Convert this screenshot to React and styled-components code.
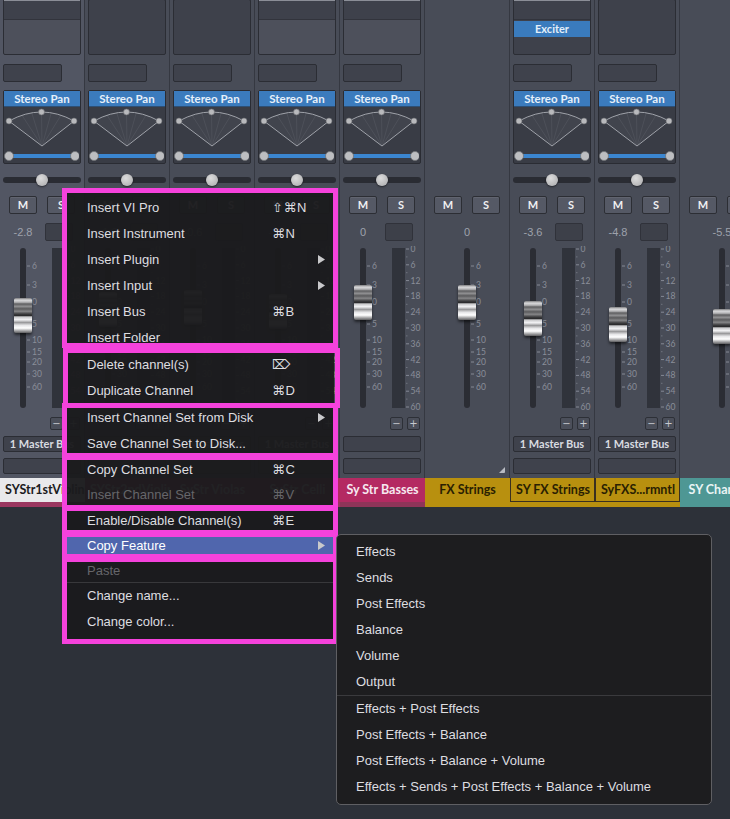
import React from "react";
import styled, { createGlobalStyle } from "styled-components";

const GlobalStyle = createGlobalStyle`
  html, body {
    margin: 0;
    padding: 0;
    background: #2d3139;
  }
  * { box-sizing: border-box; }
`;

const PINK = "#f542dc";
const GOLD = "#b8900f";

const channels = [
  { name: "SYStr1stViolins", bg: "#e9e9eb", fg: "#1b1b1d", stripe: "#9a3760", insert: "header", value: "-2.8", cap: 298, out: "1 Master Bus", selected: true },
  { name: "SYStr2ndViolins", bg: "#b42a62", fg: "#f4e6ee", stripe: "#9a3760", insert: "plain", value: "-1.2", cap: 292, out: "1 Master Bus" },
  { name: "SyStr Violas", bg: "#b42a62", fg: "#f4e6ee", stripe: "#9a3760", insert: "plain", value: "-0.6", cap: 290, out: "1 Master Bus" },
  { name: "SyStr Celli", bg: "#b42a62", fg: "#f4e6ee", stripe: "#9a3760", insert: "header", value: "-1.8", cap: 294, out: "1 Master Bus" },
  { name: "Sy Str Basses", bg: "#b42a62", fg: "#f6e8f0", stripe: "#8f3459", insert: "header", value: "0", cap: 285, out: "" },
  { name: "FX Strings", bg: GOLD, fg: "#2a1f02", stripe: GOLD, bare: true, value: "0", cap: 285, corner: true },
  { name: "SY FX Strings", bg: GOLD, fg: "#2a1f02", stripe: GOLD, outlined: true, insert: "exciter", value: "-3.6", cap: 301, out: "1 Master Bus" },
  { name: "SyFXS...rmntl", bg: GOLD, fg: "#2a1f02", stripe: GOLD, outlined: true, insert: "plain", value: "-4.8", cap: 307, out: "1 Master Bus" },
  { name: "SY Chamber", bg: "#4e9794", fg: "#eaf4f4", stripe: "#4e9794", bare: true, value: "-5.5", cap: 309 },
];

const menuItems = [
  { label: "Insert VI Pro", keys: "⇧⌘N", h: 26 },
  { label: "Insert Instrument", keys: "⌘N", h: 26 },
  { label: "Insert Plugin", sub: true, h: 26 },
  { label: "Insert Input", sub: true, h: 26 },
  { label: "Insert Bus", keys: "⌘B", h: 26 },
  { label: "Insert Folder", h: 27 },
  { label: "Delete channel(s)", keys: "⌦", h: 26 },
  { label: "Duplicate Channel", keys: "⌘D", h: 27 },
  { label: "Insert Channel Set from Disk", sub: true, h: 26 },
  { label: "Save Channel Set to Disk...", h: 27 },
  { label: "Copy Channel Set", keys: "⌘C", h: 25 },
  { label: "Insert Channel Set", keys: "⌘V", disabled: true, h: 25 },
  { label: "Enable/Disable Channel(s)", keys: "⌘E", h: 26 },
  { label: "Copy Feature", sub: true, active: true, h: 25 },
  { label: "Paste", disabled: true, sep: true, h: 25 },
  { label: "Change name...", h: 25 },
  { label: "Change color...", h: 26 },
];

const subItems = [
  "Effects",
  "Sends",
  "Post Effects",
  "Balance",
  "Volume",
  "Output",
  "-",
  "Effects + Post Effects",
  "Post Effects + Balance",
  "Post Effects + Balance + Volume",
  "Effects + Sends + Post Effects + Balance + Volume",
];

// annotation frames drawn over the menu
const frames = [
  { x: 62, y: 188, w: 276, h: 160 },
  { x: 63, y: 348, w: 277, h: 60 },
  { x: 62, y: 403, w: 276, h: 55 },
  { x: 62, y: 455, w: 276, h: 55 },
  { x: 62, y: 506, w: 276, h: 29 },
  { x: 62, y: 532, w: 276, h: 27 },
  { x: 62, y: 557, w: 276, h: 87 },
];

const faderMarks = [["6", 266], ["3", 285], ["0", 302], ["5", 324], ["10", 340], ["15", 352], ["20", 362], ["30", 374], ["60", 387]];
const meterMarks = ["0", "6", "12", "18", "24", "30", "36", "42", "48", "54", "60"];

function PanArt() {
  const rays = [0.2, 0.35, 0.5, 0.65, 0.8];
  return (
    <svg width="75" height="56" viewBox="0 0 75 56">
      <path d="M5 14 Q37.5 -4 70 14 L38 39 Z" fill="#41444d" />
      {rays.map((t) => {
        const x = (1 - t) * (1 - t) * 5 + 2 * (1 - t) * t * 37.5 + t * t * 70;
        const y = (1 - t) * (1 - t) * 14 + 2 * (1 - t) * t * -4 + t * t * 14;
        return <line key={t} x1="38" y1="39" x2={x} y2={y} stroke="#4d5059" strokeWidth="1" />;
      })}
      <path d="M5 14 Q37.5 -4 70 14" fill="none" stroke="#9fa2a9" strokeWidth="1" />
      <path d="M5 14 L38 39 L70 14" fill="none" stroke="#9fa2a9" strokeWidth="1" />
      <circle cx="5" cy="14" r="3" fill="#b8b9bc" stroke="#6a6c71" strokeWidth="0.6" />
      <circle cx="37.5" cy="5" r="3" fill="#b8b9bc" stroke="#6a6c71" strokeWidth="0.6" />
      <circle cx="70" cy="14" r="3" fill="#b8b9bc" stroke="#6a6c71" strokeWidth="0.6" />
      <line x1="5" y1="49" x2="71" y2="49" stroke="#3b86d0" strokeWidth="4" />
      <circle cx="5" cy="49" r="4.5" fill="#bdbec1" stroke="#707276" strokeWidth="0.8" />
      <circle cx="71" cy="49" r="4.5" fill="#bdbec1" stroke="#707276" strokeWidth="0.8" />
    </svg>
  );
}

function FaderArt({ centered, meter }) {
  const tx = centered ? 39 : 20;
  const top = 246;
  return (
    <svg width="84" height="166" viewBox="0 0 84 166">
      <rect x={tx} y="2" width="6" height="160" rx="3" fill="#2b2d34" />
      {faderMarks.map(([label, y]) => (
        <g key={label}>
          <line x1={tx + 7} x2={tx + 10} y1={y - top} y2={y - top} stroke="#858995" strokeWidth="1" />
          <text x={tx + 12} y={y - top + 3} fontSize="8.5" fill="#8a8e99" fontFamily="Lato, sans-serif">
            {label}
          </text>
        </g>
      ))}
      {meter && (
        <>
          <rect x="52" y="2" width="13" height="160" fill="#30333b" />
          {meterMarks.map((label, i) => {
            const y = 249 + i * 15.8 - top;
            return (
              <g key={label}>
                <line x1="66" x2="69" y1={y} y2={y} stroke="#858995" strokeWidth="1" />
                {i < meterMarks.length - 1 && (
                  <line x1="66" x2="67.5" y1={y + 7.9} y2={y + 7.9} stroke="#6f737e" strokeWidth="1" />
                )}
                <text x="70.5" y={y + 3} fontSize="8.5" fill="#8a8e99" fontFamily="Lato, sans-serif">
                  {label}
                </text>
              </g>
            );
          })}
        </>
      )}
    </svg>
  );
}

function Arrow() {
  return (
    <svg width="7" height="9" viewBox="0 0 7 9">
      <polygon points="0,0 7,4.5 0,9" fill="#c9c9cb" />
    </svg>
  );
}

function Strip({ ch }) {
  return (
    <StripWrap $selected={ch.selected}>
      {ch.bare ? (
        <TopSpacer />
      ) : (
        <>
          <InsertBox $kind={ch.insert}>
            {ch.insert !== "plain" && <InsertHead />}
            {ch.insert === "exciter" && <Plugin>Exciter</Plugin>}
          </InsertBox>
          <SendBox />
          <PanPanel>
            <PanTitle>Stereo Pan</PanTitle>
            <PanBody>
              <PanArt />
            </PanBody>
          </PanPanel>
          <PanSlider>
            <PanTrack />
            <PanKnob />
          </PanSlider>
        </>
      )}
      <ButtonRow>
        <ToggleButton>M</ToggleButton>
        <ToggleButton>S</ToggleButton>
      </ButtonRow>
      <ValueRow $centered={ch.bare}>
        <ValueText $centered={ch.bare}>{ch.value}</ValueText>
        {!ch.bare && <ValueBox />}
      </ValueRow>
      <FaderArea>
        <FaderArt centered={ch.bare} meter={!ch.bare} />
        <FaderCap $centered={ch.bare} style={{ top: ch.cap - 246 }} />
      </FaderArea>
      <TrimRow>
        {!ch.bare && (
          <>
            <TrimButton>−</TrimButton>
            <TrimButton>+</TrimButton>
          </>
        )}
      </TrimRow>
      <OutputBox $hidden={ch.bare}>{ch.out}</OutputBox>
      <OutputBox $hidden={ch.bare}>
        {ch.corner && (
          <Corner width="6" height="6" viewBox="0 0 6 6">
            <polygon points="6,0 6,6 0,6" fill="#b9bcc3" />
          </Corner>
        )}
      </OutputBox>
      <NameBar $bg={ch.bg} $fg={ch.fg} $outlined={ch.outlined}>
        {ch.name}
      </NameBar>
      <Stripe $bg={ch.stripe} />
    </StripWrap>
  );
}

export default function App() {
  return (
    <>
      <GlobalStyle />
      <Page>
        <Mixer>
          {channels.map((ch) => (
            <Strip key={ch.name} ch={ch} />
          ))}
        </Mixer>

        <Menu>
          {menuItems.map((item) => (
            <MenuRow key={item.label} $h={item.h} $active={item.active} $disabled={item.disabled} $sep={item.sep}>
              <span>{item.label}</span>
              <Keys>{item.keys}</Keys>
              <ArrowCell>{item.sub && <Arrow />}</ArrowCell>
            </MenuRow>
          ))}
        </Menu>

        {frames.map((f, i) => (
          <Frame key={i} style={{ left: f.x, top: f.y, width: f.w, height: f.h }} />
        ))}

        <SubMenu>
          {subItems.map((label, i) =>
            label === "-" ? <SubSep key={i} /> : <SubRow key={label}>{label}</SubRow>
          )}
        </SubMenu>
      </Page>
    </>
  );
}

const Page = styled.div`
  position: relative;
  width: 730px;
  height: 819px;
  overflow: hidden;
  background: #2d3139;
`;

const Mixer = styled.div`
  display: flex;
  height: 507px;
  overflow: hidden;
  font-family: Lato, "Liberation Sans", sans-serif;
`;

const StripWrap = styled.div`
  flex: 0 0 85px;
  width: 85px;
  display: flex;
  flex-direction: column;
  padding: 0 4px 0 3px;
  background: ${(p) => (p.$selected ? "#525663" : "#484c57")};
  box-shadow: inset -1px 0 0 #353841;
`;

const TopSpacer = styled.div`
  height: 196px;
`;

const InsertBox = styled.div`
  margin-top: -1px;
  height: 56px;
  display: flex;
  flex-direction: column;
  border: 1px solid #2b2d34;
  border-radius: 2px;
  background: ${(p) => (p.$kind === "header" ? "#4d505b" : "#3e414b")};
`;

const InsertHead = styled.div`
  height: 20px;
  background: #3e414b;
  border-top: 1px solid #8b8e97;
  border-bottom: 1px solid #32343c;
`;

const Plugin = styled.div`
  margin-top: 1px;
  height: 16px;
  background: #3a7bbd;
  color: #e3effa;
  font-weight: 700;
  font-size: 11px;
  line-height: 16px;
  text-align: center;
`;

const SendBox = styled.div`
  margin-top: 9px;
  width: 59px;
  height: 18px;
  background: #3f424c;
  border: 1px solid #2b2d34;
  border-radius: 2px;
`;

const PanPanel = styled.div`
  margin-top: 8px;
  border: 1px solid #2a2c33;
  border-radius: 2px;
  background: #393c45;
`;

const PanTitle = styled.div`
  height: 16px;
  background: #3b7bbd;
  color: #e6f0fa;
  font-weight: 700;
  font-size: 11.5px;
  line-height: 16px;
  text-align: center;
  border-bottom: 1px solid #2d4f75;
`;

const PanBody = styled.div`
  height: 56px;
  display: flex;
`;

const PanSlider = styled.div`
  position: relative;
  height: 32px;
  padding-top: 13px;
`;

const PanTrack = styled.div`
  height: 6px;
  border-radius: 3px;
  background: #2a2c33;
`;

const PanKnob = styled.div`
  position: absolute;
  left: 50%;
  top: 10px;
  width: 12px;
  height: 12px;
  margin-left: -6px;
  border-radius: 50%;
  background: radial-gradient(circle at 40% 35%, #dcdcdc, #a9a9ab);
  box-shadow: 0 1px 2px rgba(0, 0, 0, 0.5);
`;

const ButtonRow = styled.div`
  height: 18px;
  display: flex;
  gap: 10px;
  padding-left: 6px;
`;

const ToggleButton = styled.div`
  width: 28px;
  height: 18px;
  background: #555965;
  border: 1px solid #2c2e34;
  border-radius: 2px;
  color: #f0f0f2;
  font-weight: 700;
  font-size: 11px;
  line-height: 16px;
  text-align: center;
  box-shadow: inset 0 1px 0 rgba(255, 255, 255, 0.07);
`;

const ValueRow = styled.div`
  margin-top: 9px;
  height: 18px;
  display: flex;
  align-items: center;
  justify-content: ${(p) => (p.$centered ? "center" : "flex-start")};
`;

const ValueText = styled.div`
  width: ${(p) => (p.$centered ? "auto" : "40px")};
  text-align: center;
  color: #9ea2ac;
  font-size: 11px;
  font-family: "Liberation Sans", sans-serif;
`;

const ValueBox = styled.div`
  margin-left: 2px;
  width: 28px;
  height: 18px;
  background: #3d4049;
  border: 1px solid #30323a;
  border-radius: 2px;
`;

const FaderArea = styled.div`
  position: relative;
  margin: 5px -4px 0 -3px;
  height: 166px;
  svg { display: block; }
`;

const FaderCap = styled.div`
  position: absolute;
  left: ${(p) => (p.$centered ? 33 : 14)}px;
  width: 18px;
  height: 35px;
  border-radius: 2px;
  background: linear-gradient(
    to bottom,
    #7d7d7f 0%,
    #d9d9db 6%,
    #b5b5b7 12%,
    #5e5e60 17%,
    #8f8f91 24%,
    #5a5a5c 31%,
    #858587 38%,
    #3b3b3d 46%,
    #2c2c2e 50%,
    #c9c9cb 54%,
    #f2f2f4 62%,
    #9a9a9c 70%,
    #e6e6e8 78%,
    #ffffff 86%,
    #a0a0a2 94%,
    #5d5d5f 100%
  );
  box-shadow: 0 2px 3px rgba(0, 0, 0, 0.55);
`;

const TrimRow = styled.div`
  margin-top: 5px;
  height: 13px;
  display: flex;
  justify-content: flex-end;
  gap: 4px;
  padding-right: 1px;
`;

const TrimButton = styled.div`
  width: 13px;
  height: 13px;
  background: #4b4f5a;
  border: 1px solid #2d3037;
  border-radius: 2px;
  color: #c6c9cf;
  font-size: 10px;
  line-height: 11px;
  text-align: center;
  font-family: "DejaVu Sans", sans-serif;
`;

const OutputBox = styled.div`
  position: relative;
  margin-top: 6px;
  height: 16px;
  background: ${(p) => (p.$hidden ? "transparent" : "#3f424c")};
  border: 1px solid ${(p) => (p.$hidden ? "transparent" : "#2b2d34")};
  border-radius: 2px;
  color: #d9dbe0;
  font-weight: 700;
  font-size: 11px;
  line-height: 14px;
  text-align: center;
  white-space: nowrap;
  overflow: hidden;
`;

const Corner = styled.svg`
  position: absolute;
  right: 0;
  bottom: 0;
`;

const NameBar = styled.div`
  margin: 4px -4px 0 -3px;
  height: 24px;
  padding: 0 5px;
  background: ${(p) => p.$bg};
  color: ${(p) => p.$fg};
  border: ${(p) => (p.$outlined ? "1px solid #3a3020" : "none")};
  border-top: none;
  font-weight: 700;
  font-size: 12.5px;
  line-height: 24px;
  text-align: center;
  white-space: nowrap;
  overflow: hidden;
`;

const Stripe = styled.div`
  margin: 0 -4px 0 -3px;
  height: 5px;
  background: ${(p) => p.$bg};
`;

const Menu = styled.div`
  position: absolute;
  left: 66px;
  top: 190px;
  width: 268px;
  padding: 4px 0 6px;
  background: rgba(27, 27, 29, 0.97);
  font-family: "Liberation Sans", Arial, sans-serif;
  font-size: 13px;
`;

const MenuRow = styled.div`
  height: ${(p) => p.$h}px;
  display: grid;
  grid-template-columns: 185px 1fr 7px;
  align-items: center;
  padding: 0 9px 0 21px;
  color: ${(p) => (p.$disabled ? "#66666a" : p.$active ? "#ffffff" : "#dedee0")};
  background: ${(p) => (p.$active ? "#5066ad" : "transparent")};
  border-bottom: ${(p) => (p.$sep ? "1px solid #38383b" : "none")};
  white-space: nowrap;
`;

const Keys = styled.span`
  font-family: "Liberation Sans", "DejaVu Sans", sans-serif;
  letter-spacing: 0.5px;
`;

const ArrowCell = styled.span`
  display: flex;
  align-items: center;
`;

const Frame = styled.div`
  position: absolute;
  border: 5px solid ${PINK};
  pointer-events: none;
`;

const SubMenu = styled.div`
  position: absolute;
  left: 336px;
  top: 534px;
  width: 376px;
  padding: 4px 0;
  background: #1d1d1f;
  border: 1px solid #5f5f63;
  border-radius: 5px;
  font-family: "Liberation Sans", Arial, sans-serif;
  font-size: 13px;
`;

const SubRow = styled.div`
  height: 26px;
  line-height: 26px;
  padding-left: 19px;
  color: #dedee0;
  white-space: nowrap;
`;

const SubSep = styled.div`
  height: 1px;
  background: #3a3a3d;
`;
